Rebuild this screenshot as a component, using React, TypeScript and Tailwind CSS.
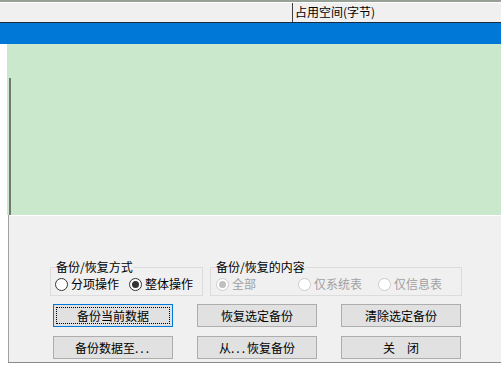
import React from 'react';

const font = { fontFamily: '"Noto Sans CJK SC", "Microsoft YaHei", sans-serif' };

type RadioProps = { label: string; checked?: boolean; disabled?: boolean; className?: string };

const Radio = ({ label, checked, disabled, className }: RadioProps): JSX.Element => (
  <div className={`flex items-center gap-[3px] ${className ?? ''}`}>
    <span
      className={`flex h-[13px] w-[13px] shrink-0 items-center justify-center rounded-full border bg-white ${
        disabled ? 'border-[#cccccc]' : 'border-[#333333]'
      }`}>
      {checked && (
        <span className={`h-[7px] w-[7px] rounded-full ${disabled ? 'bg-[#bfbfbf]' : 'bg-[#333333]'}`} />
      )}
    </span>
    <span className={disabled ? 'text-[#a0a0a0]' : 'text-black'}>{label}</span>
  </div>
);

const Button = ({ children, focused }: { children: React.ReactNode; focused?: boolean }): JSX.Element => (
  <button
    className={`relative flex h-[23px] w-[120px] items-center justify-center border bg-[#e1e1e1] text-[12px] text-black ${
      focused ? 'border-[#0078d7]' : 'border-[#adadad]'
    }`}>
    {focused && <span className="pointer-events-none absolute inset-[2px] border border-dotted border-black" />}
    {children}
  </button>
);

const Dots = (): JSX.Element => <span className="tracking-[2px]">...</span>;

export default function App(): JSX.Element {
  return (
    <div className="flex h-[370px] w-[501px] flex-col overflow-hidden bg-white text-[12px] leading-[14px]" style={font}>
      {/* list header */}
      <div className="h-[2px] bg-[#97a197]" />
      <div className="h-px bg-white" />
      <div className="flex h-[20px] border-b border-[#1c2b3c] bg-[#f0f0f0]">
        <div className="w-[293px] border-r border-[#404040]" />
        <div className="pl-[2px] pt-[2px]">占用空间(字节)</div>
      </div>
      <div className="h-[21px] bg-[#0078d7]" />

      {/* list body */}
      <div className="flex h-[171px]">
        <div className="w-[7px] bg-white" />
        <div className="flex flex-1 bg-[#cae8cc]">
          <div className="ml-[2px] mt-[34px] w-[2px] bg-[#707870]" />
        </div>
      </div>

      {/* control panel */}
      <div className="flex h-[147px]">
        <div className="w-[8px] bg-white" />
        <div className="w-px bg-[#a0a0a0]" />
        <div className="flex flex-1 flex-col border-t border-white bg-[#f0f0f0] pl-[41px] pt-[44px]">
          <div className="flex gap-[7px]">
            <fieldset className="h-[36px] w-[153px] border border-[#dcdcdc] pl-[4px]">
              <legend className="ml-[1px] px-0">备份/恢复方式</legend>
              <div className="mt-[2px] flex h-[16px] items-center">
                <Radio label="分项操作" className="w-[74px]" />
                <Radio label="整体操作" checked />
              </div>
            </fieldset>
            <fieldset className="h-[36px] w-[252px] border border-[#dcdcdc] pl-[5px]">
              <legend className="px-0">备份/恢复的内容</legend>
              <div className="mt-[2px] flex h-[16px] items-center">
                <Radio label="全部" checked disabled className="w-[82px]" />
                <Radio label="仅系统表" disabled className="w-[80px]" />
                <Radio label="仅信息表" disabled />
              </div>
            </fieldset>
          </div>
          <div className="ml-[3px] mt-[8px] grid w-[408px] grid-cols-[120px_120px_120px] gap-x-[24px] gap-y-[9px]">
            <Button focused>备份当前数据</Button>
            <Button>恢复选定备份</Button>
            <Button>清除选定备份</Button>
            <Button>
              备份数据至
              <Dots />
            </Button>
            <Button>
              从<Dots />
              恢复备份
            </Button>
            <Button>关　闭</Button>
          </div>
        </div>
      </div>
      <div className="ml-[8px] h-px bg-[#8a8a8a]" />
    </div>
  );
}
